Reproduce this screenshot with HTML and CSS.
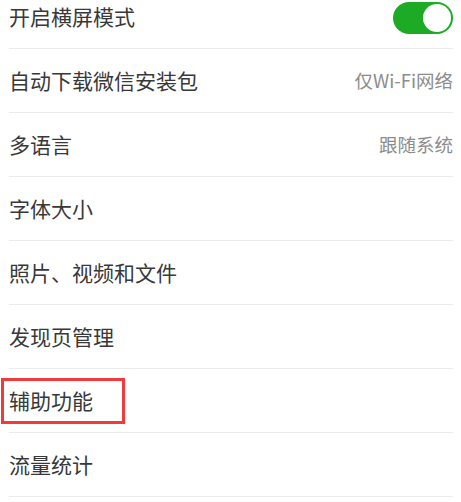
FILE: index.html
```html
<!DOCTYPE html>
<html lang="zh-CN">
<head>
<meta charset="utf-8">
<title>设置</title>
<link rel="stylesheet" href="styles.css">
</head>
<body>
<ul class="list">
  <li class="row">
    <span class="label">开启横屏模式</span>
    <span class="switch on"><span class="knob"></span></span>
  </li>
  <li class="row">
    <span class="label">自动下载微信安装包</span>
    <span class="value">仅Wi-Fi网络</span>
  </li>
  <li class="row">
    <span class="label">多语言</span>
    <span class="value">跟随系统</span>
  </li>
  <li class="row"><span class="label">字体大小</span></li>
  <li class="row"><span class="label">照片、视频和文件</span></li>
  <li class="row"><span class="label">发现页管理</span></li>
  <li class="row highlighted"><span class="label">辅助功能</span><span class="mark"></span></li>
  <li class="row"><span class="label">流量统计</span></li>
</ul>
</body>
</html>
```
FILE: styles.css
```css
html, body {
  margin: 0;
  padding: 0;
  background: #ffffff;
}
body {
  font-family: "Noto Sans CJK SC", "Noto Sans", sans-serif;
  overflow: hidden;
}
.list {
  list-style: none;
  margin: -15px 0 0 0;
  padding: 0 8px 0 9px;
}
.row {
  position: relative;
  display: flex;
  align-items: center;
  justify-content: space-between;
  height: 63px;
  border-bottom: 1px solid #ececec;
}
.label {
  font-size: 21px;
  color: #383838;
  line-height: 1;
}
.value {
  font-size: 18.5px;
  color: #8c8c8c;
  line-height: 1;
}
.switch {
  display: flex;
  align-items: center;
  justify-content: flex-end;
  box-sizing: border-box;
  width: 60px;
  height: 32px;
  padding: 2px;
  border-radius: 16px;
  background: #1dab25;
  margin-top: 2px;
}
.knob {
  width: 28px;
  height: 28px;
  border-radius: 50%;
  background: #ffffff;
}
.mark {
  position: absolute;
  left: -8px;
  top: 9px;
  width: 118px;
  height: 40px;
  border: 3px solid #f23a3a;
}
```
